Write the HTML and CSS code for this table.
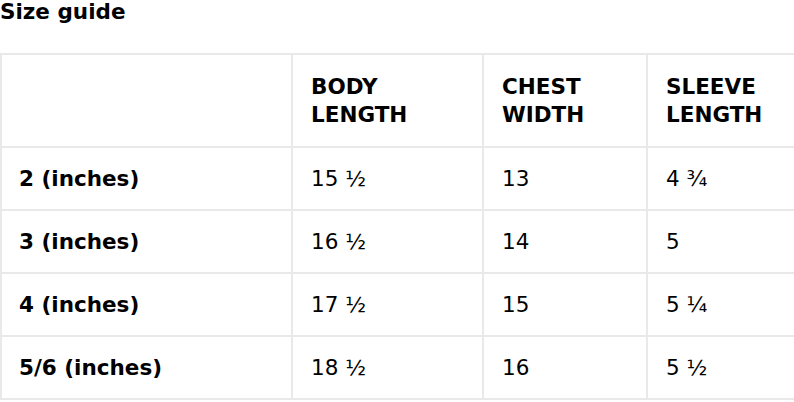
FILE: index.html
```html
<!DOCTYPE html>
<html>
<head>
<meta charset="utf-8">
<link rel="stylesheet" href="styles.css">
</head>
<body>
<h2 class="title">Size guide</h2>
<div class="wrap">
<table class="sizes">
<colgroup><col class="c1"><col class="c2"><col class="c3"><col class="c4"></colgroup>
<thead>
<tr><th></th><th>BODY<br>LENGTH</th><th>CHEST<br>WIDTH</th><th>SLEEVE<br>LENGTH</th></tr>
</thead>
<tbody>
<tr><th>2 (inches)</th><td>15 ½</td><td>13</td><td>4 ¾</td></tr>
<tr><th>3 (inches)</th><td>16 ½</td><td>14</td><td>5</td></tr>
<tr><th>4 (inches)</th><td>17 ½</td><td>15</td><td>5 ¼</td></tr>
<tr><th>5/6 (inches)</th><td>18 ½</td><td>16</td><td>5 ½</td></tr>
</tbody>
</table>
</div>
</body>
</html>
```

FILE: styles.css
```css
html, body {
  margin: 0;
  padding: 0;
  background: #fff;
}
body {
  font-family: "DejaVu Sans", sans-serif;
  color: #000;
  overflow: hidden;
}
.title {
  margin: 0 0 29px 0;
  font-size: 21.5px;
  line-height: 24px;
  font-weight: bold;
  color: #000;
}
.wrap {
  overflow: hidden;
  width: 794px;
}
.sizes {
  border-collapse: collapse;
  table-layout: fixed;
  width: 820px;
  font-size: 21.5px;
}
.c1 { width: 291px; }
.c2 { width: 191px; }
.c3 { width: 164px; }
.c4 { width: 174px; }
.sizes th, .sizes td {
  border: 2px solid #e9e9e9;
  padding: 0 18px;
  text-align: left;
  vertical-align: middle;
}
.sizes th:first-child {
  padding-left: 17px;
}
.sizes thead th {
  height: 91px;
  line-height: 28px;
  font-weight: bold;
}
.sizes tbody th {
  font-weight: bold;
}
.sizes tbody th, .sizes tbody td {
  height: 61px;
}
.sizes td {
  font-weight: normal;
}
```
